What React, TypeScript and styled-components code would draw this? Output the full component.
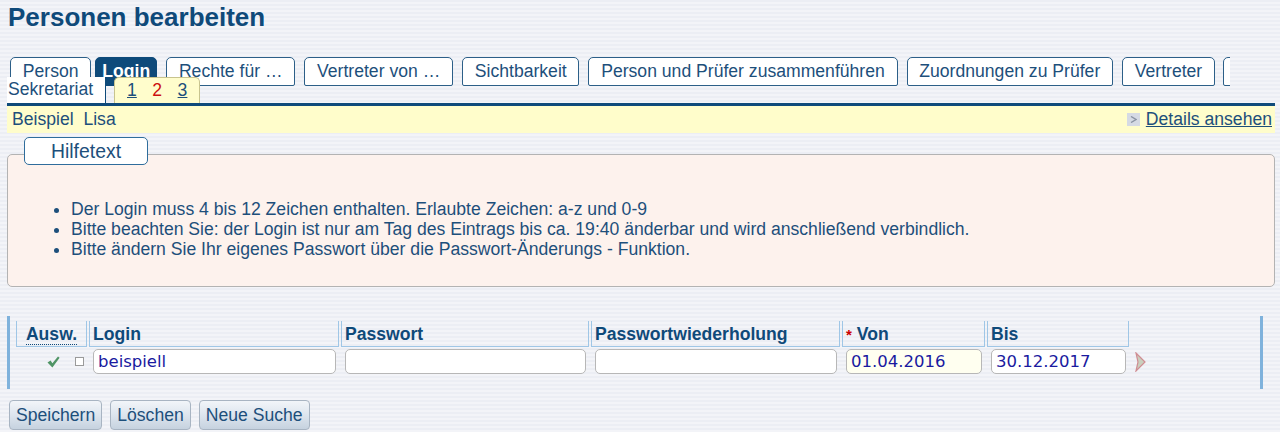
import React from "react";
import styled, { createGlobalStyle } from "styled-components";

const Global = createGlobalStyle`
  html, body { margin: 0; padding: 0; }
  body {
    min-height: 100vh;
    font-family: "Liberation Sans", Arial, sans-serif;
    background: repeating-linear-gradient(to bottom, #eceef4 0px, #eceef4 2px, #f3f4f8 2px, #f3f4f8 4px);
    overflow: hidden;
  }
`;

const Page = styled.div`
  padding: 0 5px 0 7px;
  color: #1d4f7b;
  font-size: 17.6px;
`;

const Title = styled.h1`
  margin: 0;
  padding-left: 1px;
  font-size: 26px;
  line-height: 34px;
  font-weight: bold;
  color: #0f4a7a;
`;

const TabArea = styled.div`
  position: relative;
  margin-top: 23px;
  height: 46px;
  border-bottom: 3px solid #0e4a7a;
`;

const TabStrip = styled.div`
  display: flex;
  width: 1223px;
  padding-left: 3px;
  box-sizing: border-box;
  overflow: hidden;
`;

const Tab = styled.div<{ $active?: boolean }>`
  flex-shrink: 0;
  box-sizing: border-box;
  height: 29px;
  line-height: 27px;
  padding: 0 ${(p) => (p.$active ? "6px" : "11.75px")};
  margin-right: 9px;
  margin-left: ${(p) => (p.$active ? "-5px" : "0")};
  border: 1px solid ${(p) => (p.$active ? "#0e4a7a" : "#2c5f88")};
  border-radius: 5px 5px 2px 2px;
  background: ${(p) => (p.$active ? "#0e4a7a" : "#ffffff")};
  color: ${(p) => (p.$active ? "#ffffff" : "#1d4f7b")};
  font-weight: ${(p) => (p.$active ? "bold" : "normal")};
  white-space: nowrap;
`;

const PartialTab = styled(Tab)`
  width: 40px;
  margin-left: -1px;
`;

const SubRow = styled.div`
  position: absolute;
  left: 0;
  top: 20px;
  display: flex;
  align-items: flex-end;
`;

const SubTab = styled.div`
  box-sizing: border-box;
  width: 99px;
  height: 26px;
  line-height: 25px;
  padding-left: 1px;
  background: #ffffff;
  border-right: 1px solid #0e4a7a;
`;

const Pager = styled.div`
  box-sizing: border-box;
  height: 26px;
  margin-left: 8px;
  padding: 0 12px 0 12px;
  display: flex;
  gap: 15.5px;
  line-height: 25px;
  background: #fffdcc;
  border: 1px solid #c8c48e;
  border-bottom: none;
  border-radius: 5px 5px 0 0;
`;

const PageLink = styled.span<{ $current?: boolean }>`
  color: ${(p) => (p.$current ? "#cc1010" : "#1d4f7b")};
  text-decoration: ${(p) => (p.$current ? "none" : "underline")};
`;

const InfoBar = styled.div`
  height: 27px;
  display: flex;
  align-items: center;
  justify-content: space-between;
  padding: 0 3px 0 5px;
  background: #fffdcb;
`;

const DetailLink = styled.span`
  display: flex;
  align-items: center;
  gap: 6px;
  text-decoration: underline;
`;

const ArrowBox = styled.span`
  width: 13px;
  height: 13px;
  background: #d5dae4;
  display: flex;
  align-items: center;
  justify-content: center;
`;

const HelpWrap = styled.div`
  margin-top: 4px;
`;

const Legend = styled.div`
  position: relative;
  z-index: 1;
  box-sizing: border-box;
  margin-left: 17px;
  width: 124px;
  height: 28px;
  line-height: 26px;
  text-align: center;
  font-size: 19.4px;
  background: #ffffff;
  border: 1px solid #2f6d9c;
  border-radius: 5px;
`;

const HelpBox = styled.div`
  box-sizing: border-box;
  margin-top: -11px;
  height: 133px;
  padding-top: 44px;
  background: #fdf2ed;
  border: 1px solid #b3b3b3;
  border-radius: 5px;
`;

const HelpList = styled.ul`
  margin: 0;
  padding-left: 63px;
  line-height: 20px;
`;

const Panel = styled.div`
  box-sizing: border-box;
  margin-top: 29px;
  width: 1256px;
  height: 73px;
  padding: 5px 0 0 6px;
  border-left: 3px solid #7fb2dc;
  border-right: 3px solid #7fb2dc;
`;

const Grid = styled.div`
  display: grid;
  grid-template-columns: 71px 250px 248px 249px 143px 142px 40px;
  column-gap: 2px;
  row-gap: 2px;
`;

const HeadCell = styled.div<{ $center?: boolean }>`
  box-sizing: border-box;
  height: 26px;
  line-height: 27px;
  padding: 0 3px;
  border: 1px solid #9fc6e6;
  border-top: none;
  font-weight: bold;
  color: #0f4a7a;
  text-align: ${(p) => (p.$center ? "center" : "left")};
  white-space: nowrap;
`;

const Abbr = styled.abbr`
  text-decoration: none;
  border-bottom: 1px dotted #0f4a7a;
`;

const Star = styled.span`
  color: #cc0000;
  font-size: 15px;
  margin-right: 5px;
`;

const Cell = styled.div`
  box-sizing: border-box;
  height: 25px;
  padding: 0 3px 0 4px;
  display: flex;
  align-items: center;
`;

const SelCell = styled(Cell)`
  justify-content: flex-end;
  gap: 15px;
`;

const Box = styled.span`
  width: 9px;
  height: 9px;
  box-sizing: border-box;
  border: 1px solid #9a9a9a;
  background: #fff;
`;

const Input = styled.input<{ $mandatory?: boolean }>`
  box-sizing: border-box;
  width: 100%;
  height: 25px;
  padding: 0 4px;
  border: 1px solid #b7b7b7;
  border-radius: 5px;
  background: ${(p) => (p.$mandatory ? "#fffff0" : "#ffffff")};
  font-family: "DejaVu Sans", Verdana, sans-serif;
  font-size: 16.5px;
  color: #1a1aa0;
  outline: none;
`;

const Buttons = styled.div`
  display: flex;
  gap: 8px;
  margin: 11px 0 0 2px;
`;

const Button = styled.button`
  box-sizing: border-box;
  height: 30px;
  padding: 0 6px;
  font-family: "Liberation Sans", Arial, sans-serif;
  font-size: 17.6px;
  color: #1d4f7b;
  border: 1px solid #a8b4c2;
  border-radius: 4px;
  background: linear-gradient(to bottom, #f2f5f9 0%, #dde5ee 50%, #c6d2df 100%);
`;

const Check = () => (
  <svg width="13" height="12" viewBox="0 0 13 12">
    <path d="M0.5 6.5 L3.6 4.6 L5.4 7.3 L11 0.5 L12.6 1.8 L5.4 11.5 Z" fill="#4f9465" />
  </svg>
);

const NextArrow = () => (
  <svg width="11" height="20" viewBox="0 0 11 20">
    <path d="M1 1 L10 10 L1 19 L3 10 Z" fill="#c9cfbd" stroke="#d08c92" strokeWidth="1.2" />
  </svg>
);

export default function App() {
  return (
    <>
      <Global />
      <Page>
        <Title>Personen bearbeiten</Title>
        <TabArea>
          <TabStrip>
            <Tab>Person</Tab>
            <Tab $active>Login</Tab>
            <Tab>Rechte für …</Tab>
            <Tab>Vertreter von …</Tab>
            <Tab>Sichtbarkeit</Tab>
            <Tab>Person und Prüfer zusammenführen</Tab>
            <Tab>Zuordnungen zu Prüfer</Tab>
            <Tab>Vertreter</Tab>
            <PartialTab aria-hidden />
          </TabStrip>
          <SubRow>
            <SubTab>Sekretariat</SubTab>
            <Pager>
              <PageLink>1</PageLink>
              <PageLink $current>2</PageLink>
              <PageLink>3</PageLink>
            </Pager>
          </SubRow>
        </TabArea>
        <InfoBar>
          <span>Beispiel&nbsp; Lisa</span>
          <DetailLink>
            <ArrowBox>
              <svg width="7" height="7" viewBox="0 0 7 7">
                <path d="M1 0.5 L6 3.5 L1 6.5" fill="none" stroke="#8a93a3" strokeWidth="1.4" />
              </svg>
            </ArrowBox>
            Details ansehen
          </DetailLink>
        </InfoBar>
        <HelpWrap>
          <Legend>Hilfetext</Legend>
          <HelpBox>
            <HelpList>
              <li>Der Login muss 4 bis 12 Zeichen enthalten. Erlaubte Zeichen: a-z und 0-9</li>
              <li>Bitte beachten Sie: der Login ist nur am Tag des Eintrags bis ca. 19:40 änderbar und wird anschließend verbindlich.</li>
              <li>Bitte ändern Sie Ihr eigenes Passwort über die Passwort-Änderungs - Funktion.</li>
            </HelpList>
          </HelpBox>
        </HelpWrap>
        <Panel>
          <Grid>
            <HeadCell $center>
              <Abbr title="Auswahl">Ausw.</Abbr>
            </HeadCell>
            <HeadCell>Login</HeadCell>
            <HeadCell>Passwort</HeadCell>
            <HeadCell>Passwortwiederholung</HeadCell>
            <HeadCell>
              <Star>*</Star>Von
            </HeadCell>
            <HeadCell>Bis</HeadCell>
            <div />
            <SelCell>
              <Check />
              <Box />
            </SelCell>
            <Cell>
              <Input defaultValue="beispiell" />
            </Cell>
            <Cell>
              <Input type="password" />
            </Cell>
            <Cell>
              <Input type="password" />
            </Cell>
            <Cell>
              <Input $mandatory defaultValue="01.04.2016" />
            </Cell>
            <Cell>
              <Input defaultValue="30.12.2017" />
            </Cell>
            <Cell>
              <NextArrow />
            </Cell>
          </Grid>
        </Panel>
        <Buttons>
          <Button>Speichern</Button>
          <Button>Löschen</Button>
          <Button>Neue Suche</Button>
        </Buttons>
      </Page>
    </>
  );
}
